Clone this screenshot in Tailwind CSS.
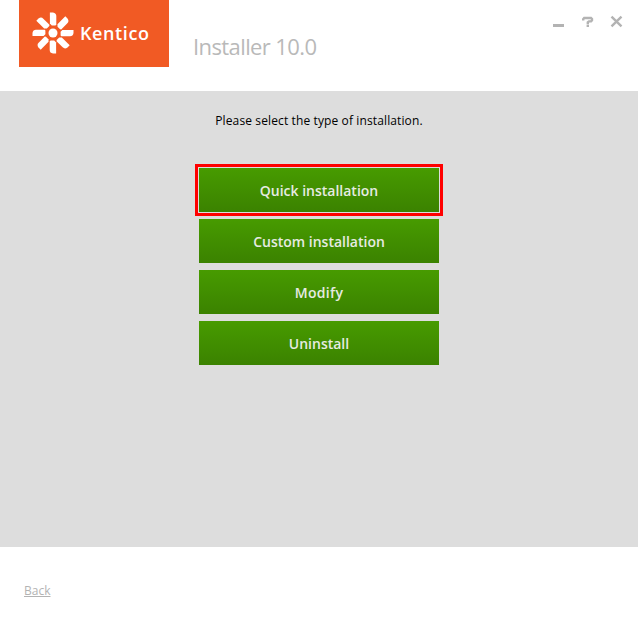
<!DOCTYPE html>
<html lang="en">
<head>
<meta charset="utf-8">
<title>Kentico Installer</title>
<script src="https://cdn.jsdelivr.net/npm/@tailwindcss/browser@4"></script>
</head>
<body class="bg-white">
<div class="flex h-[630px] w-[638px] flex-col overflow-hidden bg-white font-['Open_Sans','Noto_Sans',sans-serif]">
  <header class="flex h-[91px] shrink-0 items-start pl-[19px] pr-[14px]">
    <div class="flex h-[67px] w-[150px] items-center bg-[#f15a24] pl-[13px]">
      <svg class="relative -top-px h-[42px] w-[42px] shrink-0" viewBox="-21 -21 42 42" fill="#fff">
        <defs><path id="petal" d="M-3.1 -20.5H0Q3.3 -20 3.3 -17V-8.3L2.4 -7.6H-1.2L-3.1 -9.4Z"/></defs>
        <circle r="4.5"/>
        <use href="#petal"/><use href="#petal" transform="rotate(45)"/><use href="#petal" transform="rotate(90)"/><use href="#petal" transform="rotate(135)"/><use href="#petal" transform="rotate(180)"/><use href="#petal" transform="rotate(225)"/><use href="#petal" transform="rotate(270)"/><use href="#petal" transform="rotate(315)"/>
      </svg>
      <span class="relative -top-px ml-[6px] text-[18px] leading-6 font-semibold tracking-[0.6px] text-white">Kentico</span>
    </div>
    <h1 class="ml-[24px] mt-[31px] whitespace-nowrap text-[22px] leading-[30px] font-normal tracking-[-0.6px] text-[#b9b9b9]">Installer 10.0</h1>
    <div class="ml-auto mt-[15px] flex gap-[15px]">
      <svg class="h-[14px] w-[14px]" viewBox="0 0 14 14"><path d="M1 9h11v3H1z" fill="#b3b3b3"/></svg>
      <svg class="h-[14px] w-[14px]" viewBox="0 0 14 14" fill="none" stroke="#b3b3b3" stroke-width="2.4"><path d="M2.2 5.5V4.2L3.2 3H10L11 4V5.2L10 6.4H8L6.8 7.4V9M5.6 10.8H8"/></svg>
      <svg class="h-[14px] w-[14px]" viewBox="0 0 14 14" fill="none" stroke="#b3b3b3" stroke-width="2.4"><path d="M1.5 1.7L11.5 11.3M11.5 1.7L1.5 11.3"/></svg>
    </div>
  </header>
  <main class="flex h-[456px] shrink-0 flex-col items-center bg-[#ddd] pt-[21px]">
    <p class="whitespace-nowrap text-[12px] leading-[18px] tracking-[0.12px] text-black">Please select the type of installation.</p>
    <div class="mt-[38px] flex flex-col gap-[7px] text-[14px] font-semibold text-[#e6ebe2]">
      <button class="h-[44px] w-[240px] bg-linear-to-b from-[#479b00] to-[#3b8200] outline-3 outline-offset-1 outline-[#f00]">Quick installation</button>
      <button class="h-[44px] w-[240px] bg-linear-to-b from-[#479b00] to-[#3b8200]">Custom installation</button>
      <button class="h-[44px] w-[240px] bg-linear-to-b from-[#479b00] to-[#3b8200] tracking-[0.3px]">Modify</button>
      <button class="h-[44px] w-[240px] bg-linear-to-b from-[#479b00] to-[#3b8200]">Uninstall</button>
    </div>
  </main>
  <footer class="flex pl-[24px] pt-[36px]">
    <a class="text-[12px] leading-[16px] text-[#b3b3b3] underline decoration-1 underline-offset-[1px]">Back</a>
  </footer>
</div>
</body>
</html>
